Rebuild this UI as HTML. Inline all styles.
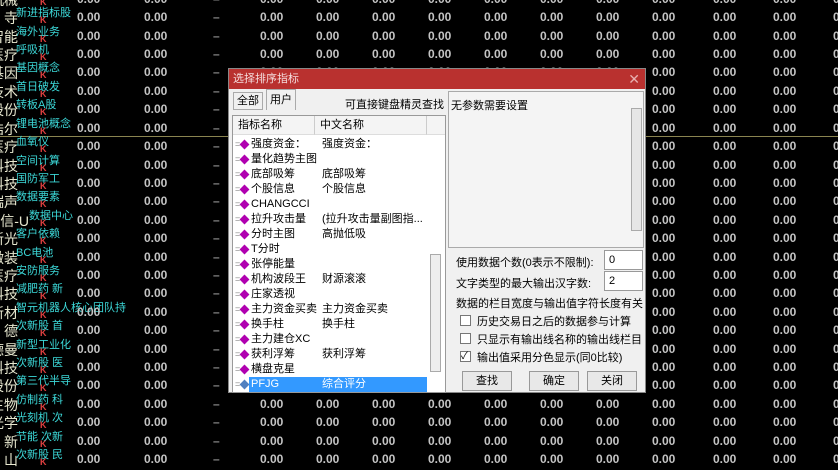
<!DOCTYPE html>
<html><head><meta charset="utf-8"><style>
*{margin:0;padding:0;box-sizing:border-box}
body{width:838px;height:468px;background:#000;position:relative;overflow:hidden;font-family:"Liberation Sans","Noto Sans CJK SC",sans-serif}
.r{position:absolute;left:0;width:838px;height:18px}
.r span{position:absolute;top:2px;font-size:12px;font-weight:bold;color:#c4c4c4;white-space:nowrap}
.r .n{left:-42px;width:60px;text-align:right;top:0;font-size:14px;font-weight:normal;color:#e8e8d0;overflow:hidden}
.r .c{left:16px;top:-4px;font-size:11px;font-weight:normal;color:#3cd8d8}
.r .k{left:40px;top:7px;font-size:9px;color:#e04040}
.r span:nth-child(4){left:77px}.r span:nth-child(5){left:144px}
.r span:nth-child(6){left:213px;color:#888}
.r span:nth-child(7){left:260px}.r span:nth-child(8){left:316px}.r span:nth-child(9){left:372px}
.r span:nth-child(10){left:428px}.r span:nth-child(11){left:484px}.r span:nth-child(12){left:540px}
.r span:nth-child(13){left:596px}.r span:nth-child(14){left:652px}.r span:nth-child(15){left:713px}
.r span:nth-child(16){left:773px}.r span:nth-child(17){left:833px}
.line{position:absolute;left:0;top:136px;width:838px;height:1px;background:#8a8450}
.dlg{position:absolute;left:228px;top:68px;width:418px;height:325px;background:#f0f0f0;border:1px solid #888;font-size:11px;color:#000}
.tb{position:absolute;left:0;top:0;width:100%;height:20px;background:#b9312f;color:#f4dcdc;font-size:11px;line-height:20px;padding-left:4px}
.x{position:absolute;right:5px;top:0;color:#e8b0b0;font-size:14px}
.a{position:absolute;white-space:nowrap}
.tab{position:absolute;border:1px solid #aaa;background:#f0f0f0;text-align:center;line-height:17px}
.lb{position:absolute;left:3px;top:46px;width:214px;height:278px;background:#fff;border:1px solid #999}
.hd{position:absolute;top:0;height:19px;background:#f4f4f4;border-right:1px solid #ccc;border-bottom:1px solid #ddd;line-height:19px;padding-left:5px}
.it{position:absolute;left:2px;height:15px;width:192px;line-height:15px}
.it i{position:absolute;left:0;top:0;color:#888;font-style:normal;font-size:9px}
.it b{position:absolute;left:6px;top:4px;width:7px;height:7px;background:#b000b0;transform:rotate(45deg)}
.it .p{position:absolute;left:16px}.it .q{position:absolute;left:87px}
.sel{background:#3399ff;color:#fff}
.inp{position:absolute;background:#fff;border:1px solid #999;padding-left:4px;line-height:18px}
.cb{position:absolute;width:11px;height:11px;border:1px solid #777;background:#fff;font-size:10px;line-height:9px}
.btn{position:absolute;width:50px;height:20px;border:1px solid #999;background:#e8e8e8;text-align:center;line-height:18px}
</style></head><body>
<div class="line"></div>
<div class="r" style="top:-10px"><span class="n">机械</span><span class="c"></span><span class="k">K</span><span>0.00</span><span>0.00</span><span>–</span><span>0.00</span><span>0.00</span><span>0.00</span><span>0.00</span><span>0.00</span><span>0.00</span><span>0.00</span><span>0.00</span><span>0.00</span><span>0.00</span><span>0.00</span></div>
<div class="r" style="top:8px"><span class="n">寺</span><span class="c">新进指标股</span><span class="k">K</span><span>0.00</span><span>0.00</span><span>–</span><span>0.00</span><span>0.00</span><span>0.00</span><span>0.00</span><span>0.00</span><span>0.00</span><span>0.00</span><span>0.00</span><span>0.00</span><span>0.00</span><span>0.00</span></div>
<div class="r" style="top:27px"><span class="n">智能</span><span class="c">海外业务</span><span class="k">K</span><span>0.00</span><span>0.00</span><span>–</span><span>0.00</span><span>0.00</span><span>0.00</span><span>0.00</span><span>0.00</span><span>0.00</span><span>0.00</span><span>0.00</span><span>0.00</span><span>0.00</span><span>0.00</span></div>
<div class="r" style="top:45px"><span class="n">医疗</span><span class="c">呼吸机</span><span class="k">K</span><span>0.00</span><span>0.00</span><span>–</span><span>0.00</span><span>0.00</span><span>0.00</span><span>0.00</span><span>0.00</span><span>0.00</span><span>0.00</span><span>0.00</span><span>0.00</span><span>0.00</span><span>0.00</span></div>
<div class="r" style="top:63px"><span class="n">基因</span><span class="c">基因概念</span><span class="k">K</span><span>0.00</span><span>0.00</span><span>–</span><span>0.00</span><span>0.00</span><span>0.00</span><span>0.00</span><span>0.00</span><span>0.00</span><span>0.00</span><span>0.00</span><span>0.00</span><span>0.00</span><span>0.00</span></div>
<div class="r" style="top:82px"><span class="n">技术</span><span class="c">首日破发</span><span class="k">K</span><span>0.00</span><span>0.00</span><span>–</span><span>0.00</span><span>0.00</span><span>0.00</span><span>0.00</span><span>0.00</span><span>0.00</span><span>0.00</span><span>0.00</span><span>0.00</span><span>0.00</span><span>0.00</span></div>
<div class="r" style="top:100px"><span class="n">股份</span><span class="c">转板A股</span><span class="k">K</span><span>0.00</span><span>0.00</span><span>–</span><span>0.00</span><span>0.00</span><span>0.00</span><span>0.00</span><span>0.00</span><span>0.00</span><span>0.00</span><span>0.00</span><span>0.00</span><span>0.00</span><span>0.00</span></div>
<div class="r" style="top:119px"><span class="n">浩尔</span><span class="c">锂电池概念</span><span class="k">K</span><span>0.00</span><span>0.00</span><span>–</span><span>0.00</span><span>0.00</span><span>0.00</span><span>0.00</span><span>0.00</span><span>0.00</span><span>0.00</span><span>0.00</span><span>0.00</span><span>0.00</span><span>0.00</span></div>
<div class="r" style="top:137px"><span class="n">医疗</span><span class="c">血氧仪</span><span class="k">K</span><span>0.00</span><span>0.00</span><span>–</span><span>0.00</span><span>0.00</span><span>0.00</span><span>0.00</span><span>0.00</span><span>0.00</span><span>0.00</span><span>0.00</span><span>0.00</span><span>0.00</span><span>0.00</span></div>
<div class="r" style="top:156px"><span class="n">科技</span><span class="c">空间计算</span><span class="k">K</span><span>0.00</span><span>0.00</span><span>–</span><span>0.00</span><span>0.00</span><span>0.00</span><span>0.00</span><span>0.00</span><span>0.00</span><span>0.00</span><span>0.00</span><span>0.00</span><span>0.00</span><span>0.00</span></div>
<div class="r" style="top:174px"><span class="n">科技</span><span class="c">国防军工</span><span class="k">K</span><span>0.00</span><span>0.00</span><span>–</span><span>0.00</span><span>0.00</span><span>0.00</span><span>0.00</span><span>0.00</span><span>0.00</span><span>0.00</span><span>0.00</span><span>0.00</span><span>0.00</span><span>0.00</span></div>
<div class="r" style="top:192px"><span class="n">瑞声</span><span class="c">数据要素</span><span class="k">K</span><span>0.00</span><span>0.00</span><span>–</span><span>0.00</span><span>0.00</span><span>0.00</span><span>0.00</span><span>0.00</span><span>0.00</span><span>0.00</span><span>0.00</span><span>0.00</span><span>0.00</span><span>0.00</span></div>
<div class="r" style="top:211px"><span class="n" style="left:-31px">通信-U</span><span class="c" style="left:29px">数据中心</span><span class="k">K</span><span>0.00</span><span>0.00</span><span>–</span><span>0.00</span><span>0.00</span><span>0.00</span><span>0.00</span><span>0.00</span><span>0.00</span><span>0.00</span><span>0.00</span><span>0.00</span><span>0.00</span><span>0.00</span></div>
<div class="r" style="top:229px"><span class="n">新光</span><span class="c">客户依赖</span><span class="k">K</span><span>0.00</span><span>0.00</span><span>–</span><span>0.00</span><span>0.00</span><span>0.00</span><span>0.00</span><span>0.00</span><span>0.00</span><span>0.00</span><span>0.00</span><span>0.00</span><span>0.00</span><span>0.00</span></div>
<div class="r" style="top:248px"><span class="n">微装</span><span class="c">BC电池</span><span class="k">K</span><span>0.00</span><span>0.00</span><span>–</span><span>0.00</span><span>0.00</span><span>0.00</span><span>0.00</span><span>0.00</span><span>0.00</span><span>0.00</span><span>0.00</span><span>0.00</span><span>0.00</span><span>0.00</span></div>
<div class="r" style="top:266px"><span class="n">医疗</span><span class="c">安防服务</span><span class="k">K</span><span>0.00</span><span>0.00</span><span>–</span><span>0.00</span><span>0.00</span><span>0.00</span><span>0.00</span><span>0.00</span><span>0.00</span><span>0.00</span><span>0.00</span><span>0.00</span><span>0.00</span><span>0.00</span></div>
<div class="r" style="top:284px"><span class="n">科技</span><span class="c">减肥药 新</span><span class="k">K</span><span>0.00</span><span>0.00</span><span>–</span><span>0.00</span><span>0.00</span><span>0.00</span><span>0.00</span><span>0.00</span><span>0.00</span><span>0.00</span><span>0.00</span><span>0.00</span><span>0.00</span><span>0.00</span></div>
<div class="r" style="top:303px"><span class="n">新材</span><span class="c">智元机器人核心团队持</span><span class="k">K</span><span>0.00</span><span>0.00</span><span>–</span><span>0.00</span><span>0.00</span><span>0.00</span><span>0.00</span><span>0.00</span><span>0.00</span><span>0.00</span><span>0.00</span><span>0.00</span><span>0.00</span><span>0.00</span></div>
<div class="r" style="top:321px"><span class="n">德</span><span class="c">次新股 首</span><span class="k">K</span><span>0.00</span><span>0.00</span><span>–</span><span>0.00</span><span>0.00</span><span>0.00</span><span>0.00</span><span>0.00</span><span>0.00</span><span>0.00</span><span>0.00</span><span>0.00</span><span>0.00</span><span>0.00</span></div>
<div class="r" style="top:340px"><span class="n">德曼</span><span class="c">新型工业化</span><span class="k">K</span><span>0.00</span><span>0.00</span><span>–</span><span>0.00</span><span>0.00</span><span>0.00</span><span>0.00</span><span>0.00</span><span>0.00</span><span>0.00</span><span>0.00</span><span>0.00</span><span>0.00</span><span>0.00</span></div>
<div class="r" style="top:358px"><span class="n">科技</span><span class="c">次新股 医</span><span class="k">K</span><span>0.00</span><span>0.00</span><span>–</span><span>0.00</span><span>0.00</span><span>0.00</span><span>0.00</span><span>0.00</span><span>0.00</span><span>0.00</span><span>0.00</span><span>0.00</span><span>0.00</span><span>0.00</span></div>
<div class="r" style="top:376px"><span class="n">股份</span><span class="c">第三代半导</span><span class="k">K</span><span>0.00</span><span>0.00</span><span>–</span><span>0.00</span><span>0.00</span><span>0.00</span><span>0.00</span><span>0.00</span><span>0.00</span><span>0.00</span><span>0.00</span><span>0.00</span><span>0.00</span><span>0.00</span></div>
<div class="r" style="top:395px"><span class="n">生物</span><span class="c">仿制药 科</span><span class="k">K</span><span>0.00</span><span>0.00</span><span>–</span><span>0.00</span><span>0.00</span><span>0.00</span><span>0.00</span><span>0.00</span><span>0.00</span><span>0.00</span><span>0.00</span><span>0.00</span><span>0.00</span><span>0.00</span></div>
<div class="r" style="top:413px"><span class="n">光学</span><span class="c">光刻机 次</span><span class="k">K</span><span>0.00</span><span>0.00</span><span>–</span><span>0.00</span><span>0.00</span><span>0.00</span><span>0.00</span><span>0.00</span><span>0.00</span><span>0.00</span><span>0.00</span><span>0.00</span><span>0.00</span><span>0.00</span></div>
<div class="r" style="top:432px"><span class="n">新</span><span class="c">节能 次新</span><span class="k">K</span><span>0.00</span><span>0.00</span><span>–</span><span>0.00</span><span>0.00</span><span>0.00</span><span>0.00</span><span>0.00</span><span>0.00</span><span>0.00</span><span>0.00</span><span>0.00</span><span>0.00</span><span>0.00</span></div>
<div class="r" style="top:450px"><span class="n">山</span><span class="c">次新股 民</span><span class="k">K</span><span>0.00</span><span>0.00</span><span>–</span><span>0.00</span><span>0.00</span><span>0.00</span><span>0.00</span><span>0.00</span><span>0.00</span><span>0.00</span><span>0.00</span><span>0.00</span><span>0.00</span><span>0.00</span></div>

<div class="dlg">
<div class="tb">选择排序指标<span class="x">✕</span></div>
<div class="tab" style="left:4px;top:23px;width:30px;height:18px">全部</div>
<div class="tab" style="left:37px;top:20px;width:30px;height:21px;border-bottom:none;line-height:20px">用户</div>
<div class="a" style="left:116px;top:27px">可直接键盘精灵查找</div>
<div class="lb">
<div class="hd" style="left:0;width:82px">指标名称</div>
<div class="hd" style="left:82px;width:112px">中文名称</div>
<div class="hd" style="left:194px;width:18px;border-right:none"></div>
<div style="position:absolute;left:197px;top:138px;width:11px;height:118px;border:1px solid #aaa;background:#eee"></div>
<div class="it" style="top:21px"><i>=</i><b></b><span class="p">强度资金：</span><span class="q">强度资金：</span></div>
<div class="it" style="top:36px"><i>=</i><b></b><span class="p">量化趋势主图</span></div>
<div class="it" style="top:51px"><i>=</i><b></b><span class="p">底部吸筹</span><span class="q">底部吸筹</span></div>
<div class="it" style="top:66px"><i>=</i><b></b><span class="p">个股信息</span><span class="q">个股信息</span></div>
<div class="it" style="top:81px"><i>=</i><b></b><span class="p">CHANGCCI</span></div>
<div class="it" style="top:96px"><i>=</i><b></b><span class="p">拉升攻击量</span><span class="q">(拉升攻击量副图指...</span></div>
<div class="it" style="top:111px"><i>=</i><b></b><span class="p">分时主图</span><span class="q">高抛低吸</span></div>
<div class="it" style="top:126px"><i>=</i><b></b><span class="p">T分时</span></div>
<div class="it" style="top:141px"><i>=</i><b></b><span class="p">张停能量</span></div>
<div class="it" style="top:156px"><i>=</i><b></b><span class="p">机构波段王</span><span class="q">财源滚滚</span></div>
<div class="it" style="top:171px"><i>=</i><b></b><span class="p">庄家透视</span></div>
<div class="it" style="top:186px"><i>=</i><b></b><span class="p">主力资金买卖</span><span class="q">主力资金买卖</span></div>
<div class="it" style="top:201px"><i>=</i><b></b><span class="p">换手柱</span><span class="q">换手柱</span></div>
<div class="it" style="top:216px"><i>=</i><b></b><span class="p">主力建仓XC</span></div>
<div class="it" style="top:231px"><i>=</i><b></b><span class="p">获利浮筹</span><span class="q">获利浮筹</span></div>
<div class="it" style="top:246px"><i>=</i><b></b><span class="p">横盘克星</span></div>
<div class="it" style="top:261px"><i>=</i><b style="background:#5080c0"></b><span class="p sel" style="left:14px;width:178px;padding-left:2px">PFJG<span style="position:absolute;left:73px">综合评分</span></span></div>
</div>
<div style="position:absolute;left:219px;top:22px;width:196px;height:157px;background:#f4f4f4;border:1px solid #aaa">
<div class="a" style="left:2px;top:5px">无参数需要设置</div>
<div style="position:absolute;right:1px;top:16px;width:11px;height:123px;border:1px solid #aaa;background:#e6e6e6"></div>
</div>
<div class="a" style="left:227px;top:185px">使用数据个数(0表示不限制):</div>
<div class="inp" style="left:375px;top:181px;width:39px;height:20px">0</div>
<div class="a" style="left:227px;top:206px">文字类型的最大输出汉字数:</div>
<div class="inp" style="left:375px;top:202px;width:39px;height:20px">2</div>
<div class="a" style="left:227px;top:226px">数据的栏目宽度与输出值字符长度有关</div>
<div class="cb" style="left:231px;top:246px"></div><div class="a" style="left:248px;top:244px">历史交易日之后的数据参与计算</div>
<div class="cb" style="left:231px;top:264px"></div><div class="a" style="left:248px;top:262px">只显示有输出线名称的输出线栏目</div>
<div class="cb" style="left:231px;top:282px">✓</div><div class="a" style="left:248px;top:280px">输出值采用分色显示(同0比较)</div>
<div class="btn" style="left:233px;top:302px">查找</div>
<div class="btn" style="left:300px;top:302px">确定</div>
<div class="btn" style="left:358px;top:302px">关闭</div>
</div>
</body></html>
